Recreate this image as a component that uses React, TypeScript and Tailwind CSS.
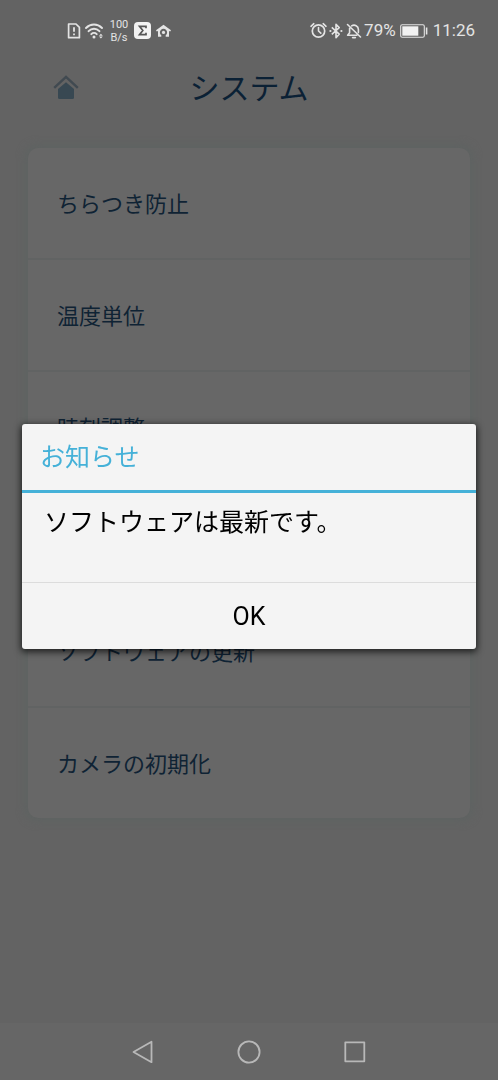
import { useState } from "react";

interface SettingItem {
  id: string;
  label: string;
}

const settings: SettingItem[] = [
  { id: "flicker", label: "ちらつき防止" },
  { id: "temperature", label: "温度単位" },
  { id: "time", label: "時刻調整" },
  { id: "blank", label: "" },
  { id: "update", label: "ソフトウェアの更新" },
  { id: "reset", label: "カメラの初期化" },
];

function StatusBar() {
  return (
    <div className="flex h-[61px] items-center justify-between pl-[66px] pr-[23px] text-[#e4e4e4]">
      <div className="flex items-center">
        <svg className="h-4 w-4" viewBox="0 0 16 16" fill="none" stroke="currentColor" aria-hidden="true">
          <path strokeWidth="1.7" strokeLinejoin="round" d="M2.6 1h7.4l3.4 3.4v10.3H2.6Z" />
          <path strokeWidth="1.8" d="M8 4.2v4.6M8 10.4v1.8" />
        </svg>
        <svg className="ml-[3px] h-4 w-[19px]" viewBox="0 0 19 16" fill="none" stroke="currentColor" aria-hidden="true">
          <path strokeWidth="1.9" strokeLinecap="round" d="M1 5c4.6-4.6 11.4-4.6 16 0M3.6 8.2c3.1-3.2 7.7-3.2 10.8 0M6.3 11.2c1.6-1.6 3.8-1.6 5.4 0" />
          <circle cx="9" cy="13.9" r="1.5" fill="currentColor" stroke="none" />
          <path fill="currentColor" stroke="none" d="M14 12.700 15.900 10.800l1.900 1.900ZM14 13.500l1.900 1.900 1.900-1.900Z" />
        </svg>
        <div className="ml-[5px] w-5 text-center text-[11px] leading-[13px]">
          <p>100</p>
          <p>B/s</p>
        </div>
        <svg className="ml-[5px] h-[17px] w-[17px]" viewBox="0 0 17 17" aria-hidden="true">
          <rect width="17" height="17" rx="4" fill="#f2f2f2" />
          <path fill="none" stroke="#555" strokeWidth="1.7" d="M12 6.200V4.300H5.500l3.300 4.200-3.300 4.200H12v-1.900" />
        </svg>
        <svg className="ml-[5px] h-[15px] w-[15px]" viewBox="0 0 15 15" aria-hidden="true">
          <path
            fill="currentColor"
            fillRule="evenodd"
            d="M7.500 1.800 15 7.300l-.8 1.300-1.200-.6v5.700H9.700v-1.500a3.600 3.600 0 1 0-4.400 0v1.500H2V8l-1.200.6L0 7.300Z"
          />
          <circle cx="7.500" cy="9.400" r="1.600" fill="currentColor" />
        </svg>
      </div>
      <div className="flex items-center text-[17px]">
        <svg className="h-[17px] w-[17px]" viewBox="0 0 17 17" fill="none" stroke="currentColor" strokeLinecap="round" aria-hidden="true">
          <circle cx="8.5" cy="9" r="6.2" strokeWidth="1.7" />
          <path strokeWidth="1.6" d="M8.500 5.600V9l2.300 2.200M1 4.300l2.800-2.600M16 4.300l-2.800-2.600" />
        </svg>
        <svg className="ml-[2px] h-4 w-[14px]" viewBox="0 0 14 16" fill="none" stroke="currentColor" aria-hidden="true">
          <path strokeWidth="1.6" strokeLinejoin="round" d="m2.800 4.400 7.400 6.800L7 14.600V1.400l3.200 3.200-7.400 6.800" />
          <circle cx="1.400" cy="8" r="1.100" fill="currentColor" stroke="none" />
          <circle cx="12.400" cy="8" r="1.100" fill="currentColor" stroke="none" />
        </svg>
        <svg className="ml-[3px] h-4 w-4" viewBox="0 0 16 16" fill="none" stroke="currentColor" strokeLinecap="round" strokeLinejoin="round" aria-hidden="true">
          <path strokeWidth="1.6" d="M1.500 1.500l13 12.500M3.600 5.200v4.600l-2 2.400h9.200M5.600 2.900c3-1.900 6.800.2 6.800 3.500v3.200M6.600 14.600h2.800" />
        </svg>
        <span className="ml-[2px]">79%</span>
        <svg className="ml-1 h-[14px] w-7" viewBox="0 0 28 14" aria-hidden="true">
          <rect x=".7" y=".7" width="23.600" height="12.600" rx="1.500" fill="none" stroke="currentColor" strokeWidth="1.100" />
          <rect x="2.300" y="2.300" width="16" height="9.400" fill="#f2f2f2" />
          <path stroke="currentColor" strokeWidth="1.600" d="M26.600 3.500v7" />
        </svg>
        <span className="ml-[5px]">11:26</span>
      </div>
    </div>
  );
}

function NavigationBar() {
  return (
    <nav className="flex h-[57px] items-center justify-center gap-[82px] bg-[#666666] text-[#b8b8b8]">
      <button type="button" aria-label="戻る">
        <svg className="block h-6 w-6" viewBox="0 0 24 24" fill="none" stroke="currentColor" strokeWidth="1.800" strokeLinejoin="round">
          <path d="M20.500 1.800v20.400L2.500 12Z" />
        </svg>
      </button>
      <button type="button" aria-label="ホーム">
        <svg className="block h-6 w-6" viewBox="0 0 24 24" fill="none" stroke="currentColor" strokeWidth="1.800">
          <circle cx="12" cy="12" r="10.600" />
        </svg>
      </button>
      <button type="button" aria-label="履歴">
        <svg className="block h-6 w-6" viewBox="0 0 24 24" fill="none" stroke="currentColor" strokeWidth="1.800" strokeLinejoin="round">
          <rect x="2.300" y="2.300" width="19" height="19" />
        </svg>
      </button>
    </nav>
  );
}

interface NoticeProps {
  title: string;
  message: string;
  onClose: () => void;
}

function Notice({ title, message, onClose }: NoticeProps) {
  return (
    <div className="fixed inset-0 flex items-center justify-center px-[22px] pb-[7px]">
      <div
        role="dialog"
        aria-labelledby="notice-title"
        className="w-full rounded-[3px] bg-[#f4f4f4] shadow-[0_2px_7px_1px_rgba(0,0,0,0.7)]"
      >
        <h2
          id="notice-title"
          className="border-b-3 border-[#45b1d8] px-[18px] pb-[14px] pt-4 text-[25px] leading-[36px] text-[#45b1d8]"
        >
          {title}
        </h2>
        <p className="h-[89px] px-[22px] pt-3 text-[25px] leading-[36px] text-black">
          {message}
        </p>
        <button
          type="button"
          onClick={onClose}
          className="block h-[67px] w-full border-t border-[#dcdcdc] pt-[2px] text-[25px] text-black"
        >
          OK
        </button>
      </div>
    </div>
  );
}

export default function App() {
  const [open, setOpen] = useState(true);

  return (
    <div className="flex min-h-screen flex-col bg-[#636363] font-[Roboto,'Noto_Sans_CJK_JP',sans-serif]">
      <StatusBar />
      <header className="grid h-[87px] grid-cols-[1fr_auto_1fr] items-start px-[52px]">
        <button type="button" aria-label="ホームへ" className="mt-3 w-7">
          <svg className="h-7 w-7" viewBox="0 0 28 28" fill="none">
            <path fill="#384852" d="M14 9.200 22 16v8.500q0 1.500-1.500 1.500h-13Q6 26 6 24.500V16Z" />
            <path stroke="#414a51" strokeWidth="2.400" d="m2.200 14.800 11.800-11 11.800 11" />
          </svg>
        </button>
        <h1 className="mt-[6px] text-[30px] leading-[44px] text-[#0b2135]">システム</h1>
      </header>
      <main className="flex-1 px-7">
        <ul className="divide-y-2 divide-[#616363] rounded-[10px] bg-[#676767] shadow-[0_0_8px_3px_#5e6362]">
          {settings.map((item) => (
            <li key={item.id}>
              <button
                type="button"
                className="block h-[110px] w-full px-[29px] pt-[2px] text-left text-[22px] text-[#0f2334]"
              >
                {item.label}
              </button>
            </li>
          ))}
        </ul>
      </main>
      <NavigationBar />
      {open && (
        <Notice
          title="お知らせ"
          message="ソフトウェアは最新です。"
          onClose={() => setOpen(false)}
        />
      )}
    </div>
  );
}
